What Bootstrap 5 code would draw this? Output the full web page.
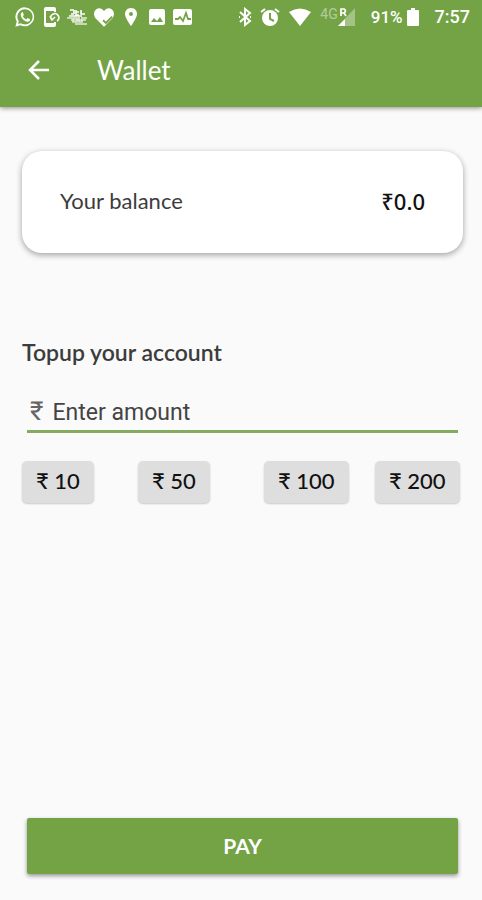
<!DOCTYPE html>
<html lang="en">
<head>
<meta charset="utf-8">
<meta name="viewport" content="width=device-width, initial-scale=1">
<title>Wallet</title>
<link href="https://cdn.jsdelivr.net/npm/bootstrap@5.3.0/dist/css/bootstrap.min.css" rel="stylesheet">
<style>
  :root { --leaf: #73a345; }
  body { background: #fafafa; color: #3c3c3c; font-family: Lato, "Open Sans", sans-serif; font-size: 22px; line-height: 28px; }
  .top-area { background: var(--leaf); box-shadow: 0 1px 5px rgba(0,0,0,.45); }
  .status-strip { height: 34px; padding: 0 12px 0 14px; font: 500 17px/34px Roboto, sans-serif; }
  .status-strip svg { display: block; fill: currentColor; flex: none; }
  .status-icons { gap: 5px; }
  .net { font-size: 14px; line-height: 20px; font-weight: 400; opacity: .45; padding-bottom: 6px; }
  .clock { font-size: 18px; }
  .app-bar { height: 73px; padding: 0 26px 2px; gap: 46px; }
  .app-title { font-size: 26px; line-height: 32px; }
  .back-btn { line-height: 0; }
  .page-body { padding: 44px 19px 26px 22px; }
  .balance-card { border-radius: 20px; min-height: 102px; padding: 0 38px 2px; box-shadow: 0 2px 6px rgba(0,0,0,.36); }
  .balance-sum { font-family: "Noto Sans", sans-serif; font-weight: 500; color: #111; }
  .topup { margin-top: 85px; }
  .topup-title { font-size: 23px; line-height: 28px; font-weight: 600; margin-bottom: 26px; }
  .amount-line { margin: 0 5px; border-bottom: 3px solid #84ac60; height: 41px; gap: 9px; padding: 0 3px; }
  .amount-line .rupee { font: 400 26px/32px Roboto, sans-serif; color: #666; }
  .amount-line input { font: 400 23px/32px Roboto, sans-serif; color: #444; min-width: 0; padding: 3px 0 0; }
  .amount-line input::placeholder { color: #444; opacity: 1; }
  .amount-line input:focus { outline: none; }
  .quick-row { display: grid; grid-template-columns: 116fr 126fr 111fr 88fr; justify-items: start; margin-top: 28px; }
  .quick { background: #dedede; color: #111; border: 0; border-radius: 5px; height: 42px; padding: 0 14px 3px; font-weight: 500; box-shadow: 0 1px 2px rgba(0,0,0,.2); white-space: nowrap; }
  .pay-btn { background: var(--leaf); color: #fff; border: 0; border-radius: 2px; height: 56px; margin: 0 5px; font-size: 21px; font-weight: 700; box-shadow: 0 2px 4px rgba(0,0,0,.4); }
</style>
</head>
<body class="min-vh-100 d-flex flex-column">
<header class="top-area text-white">
  <div class="status-strip d-flex align-items-center justify-content-between">
    <div class="status-icons d-flex align-items-center">
      <svg width="22" height="22" viewBox="0 0 24 24"><path d="M12 1.500A10.300 10.300 0 0 0 3 17l-1.500 5.500L7 21A10.300 10.300 0 1 0 12 1.500zm0 2a8.300 8.300 0 1 1-4.600 15.200L4.400 19.500l.8-3A8.300 8.300 0 0 1 12 3.500z"/><path d="M8.700 6.700c-3.700 2.300.9 9.700 5.600 10.500 2.300.3 3.600-1.300 3.200-2.700l-2.800-1.300-1.300 1.400c-1.800-.8-3-2-3.700-3.500l1-1.300-1-2.900z"/></svg>
      <svg width="20" height="22" viewBox="0 0 20 22"><path fill-rule="evenodd" d="M5 1h8a2 2 0 0 1 2 2v3h-2V5H5v12h8v-1h2v3a2 2 0 0 1-2 2H5a2 2 0 0 1-2-2V3a2 2 0 0 1 2-2z"/><path d="M10 13a4 4 0 1 1 6 2M9 10l2 4 3-3" fill="none" stroke="currentColor" stroke-width="1.600"/></svg>
      <svg width="22" height="20" viewBox="0 0 22 20"><path d="M4 3h4M5 7h3M8 3v4M10 3v5h3M10 5h3M15 3v4h4M3 9h13" fill="none" stroke="currentColor" stroke-width="1.600"/><path d="M1 11h5M7 11h4v4H7zM13 10v5h3v-5M5 13h15M17 11h4M9 17h12" fill="none" stroke="currentColor" stroke-width="1.600" opacity=".8"/></svg>
      <svg width="22" height="21" viewBox="0 0 24 22"><path d="M12 21 3 12C-1 7 2 1 7 1q3 0 5 3 2-3 5-3c5 0 8 6 4 11z"/><path d="m11 14 3 3 7-7" fill="none" stroke="#73a345" stroke-width="2"/></svg>
      <svg width="22" height="20" viewBox="0 0 22 20"><path fill-rule="evenodd" d="M11 1c-4 0-6 3-6 6 0 4 6 12 6 12s6-8 6-12c0-3-2-6-6-6zm0 4a2 2 0 1 1 0 4 2 2 0 0 1 0-4z"/></svg>
      <svg width="20" height="18" viewBox="0 0 20 18"><path fill-rule="evenodd" d="M4 1h12a2 2 0 0 1 2 2v12a2 2 0 0 1-2 2H4a2 2 0 0 1-2-2V3a2 2 0 0 1 2-2zm0 13h12l-3-5-3 4-3-3z"/></svg>
      <svg width="21" height="18" viewBox="0 0 21 18"><rect x="1" y="1" width="19" height="16" rx="2"/><path d="M3 11h3l2-2 3 4 3-8 2 6h3" fill="none" stroke="#73a345" stroke-width="1.800"/></svg>
    </div>
    <div class="d-flex align-items-center">
      <svg class="me-2" width="14" height="20" viewBox="0 0 14 20"><path d="m2 5 10 9-5 4V2l5 4-10 9M1 10h1m10 0h1" fill="none" stroke="currentColor" stroke-width="2"/></svg>
      <svg class="me-2" width="20" height="20" viewBox="0 0 20 20"><circle cx="10" cy="11" r="8"/><path d="m1 5 4-3m14 3-4-3" stroke="currentColor" stroke-width="2"/><path d="M10 6v6l4 2" fill="none" stroke="#73a345" stroke-width="2"/></svg>
      <svg width="24" height="18" viewBox="0 0 24 18"><path d="M1 4q11-7 22 0L12 18z"/></svg>
      <span class="net ms-2">4G</span>
      <svg class="me-3" width="17" height="20" viewBox="0 0 17 20"><path d="M17 1v18H0z" opacity=".35"/><path d="M7 12v7H0z"/><path d="M3 9V2h3q3 2 0 4H3m3 0 2 3" fill="none" stroke="currentColor" stroke-width="1.700"/></svg>
      <span>91%</span>
      <svg class="ms-1" width="12" height="18" viewBox="0 0 12 18"><path d="M4 0h4v2h3a1 1 0 0 1 1 1v14a1 1 0 0 1-1 1H1a1 1 0 0 1-1-1V3a1 1 0 0 1 1-1h3z"/></svg>
      <span class="clock ms-3">7:57</span>
    </div>
  </div>
  <div class="app-bar d-flex align-items-center">
    <button type="button" class="back-btn btn p-0 border-0 text-white" aria-label="Back"><svg width="25" height="24" viewBox="0 0 25 24"><path d="M23 12H4m9-9-9 9 9 9" fill="none" stroke="currentColor" stroke-width="2.500"/></svg></button>
    <h1 class="app-title fw-normal m-0">Wallet</h1>
  </div>
</header>
<main class="page-body d-flex flex-column flex-grow-1">
  <section class="balance-card bg-white d-flex align-items-center justify-content-between">
    <span>Your balance</span>
    <span class="balance-sum">₹0.0</span>
  </section>
  <form class="topup d-flex flex-column flex-grow-1">
    <h2 class="topup-title"><label for="amount">Topup your account</label></h2>
    <div class="amount-line d-flex align-items-center">
      <span class="rupee">₹</span>
      <input id="amount" class="border-0 bg-transparent flex-grow-1" type="text" inputmode="decimal" placeholder="Enter amount">
    </div>
    <div class="quick-row">
      <button type="button" class="quick">₹ 10</button>
      <button type="button" class="quick">₹ 50</button>
      <button type="button" class="quick">₹ 100</button>
      <button type="button" class="quick">₹ 200</button>
    </div>
    <button type="submit" class="pay-btn mt-auto">PAY</button>
  </form>
</main>
<script src="https://cdn.jsdelivr.net/npm/bootstrap@5.3.0/dist/js/bootstrap.bundle.min.js"></script>
</body>
</html>
